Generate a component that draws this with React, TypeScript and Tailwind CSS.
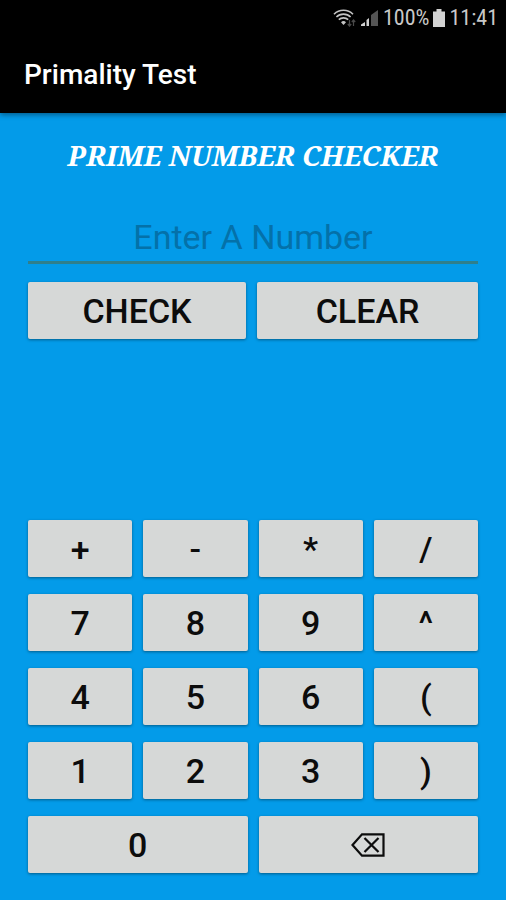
import { useState } from "react";

const KEYS = [
  "+", "-", "*", "/",
  "7", "8", "9", "^",
  "4", "5", "6", "(",
  "1", "2", "3", ")",
];

const BUTTON =
  "flex h-[57px] items-center justify-center rounded-xs bg-[#d6d8d7] text-[34px] leading-none font-medium text-[#0c0c0c] shadow-[0_1px_3px_rgba(0,0,0,0.4)] active:bg-[#c2c4c3]";

function isPrime(n: number) {
  if (n < 2) return false;
  for (let i = 2; i * i <= n; i++) {
    if (n % i === 0) return false;
  }
  return true;
}

// Small recursive descent parser for + - * / ^ and parentheses
function evaluate(source: string) {
  let pos = 0;

  const atom = (): number => {
    if (source[pos] === "(") {
      pos++;
      const value = sum();
      pos++;
      return value;
    }
    if (source[pos] === "-") {
      pos++;
      return -atom();
    }
    const start = pos;
    while (/\d/.test(source[pos] ?? "")) pos++;
    return start === pos ? NaN : Number(source.slice(start, pos));
  };

  const power = (): number => {
    const base = atom();
    if (source[pos] !== "^") return base;
    pos++;
    return base ** power();
  };

  const product = (): number => {
    let value = power();
    while (source[pos] === "*" || source[pos] === "/") {
      const op = source[pos++];
      value = op === "*" ? value * power() : value / power();
    }
    return value;
  };

  const sum = (): number => {
    let value = product();
    while (source[pos] === "+" || source[pos] === "-") {
      const op = source[pos++];
      value = op === "+" ? value + product() : value - product();
    }
    return value;
  };

  const total = sum();
  return pos < source.length ? NaN : total;
}

function WifiIcon() {
  return (
    <svg viewBox="0 0 24 20" className="h-5 w-6" fill="none" stroke="#c4c4c4" strokeWidth="1.6">
      <path d="M1 6.200C6.300 1 14.700 1 20 6.200" />
      <path d="M3.400 9C7.200 5.200 13.800 5.200 17.600 9" />
      <path d="M5.800 11.700C8.400 9.200 12.600 9.200 15.200 11.700" />
      <path d="M8 14.200C9.400 12.700 11.600 12.700 13 14.200L10.500 17Z" fill="#c4c4c4" stroke="none" />
      <path d="M16.500 12v6M14.800 16l1.700 2 1.700-2M20.500 18v-6M18.800 14l1.700-2 1.700 2" stroke="#4a4a4a" strokeWidth="1.2" />
    </svg>
  );
}

function SignalIcon() {
  return (
    <svg viewBox="0 0 18 18" className="h-[18px] w-[18px]">
      <path d="M0 17v-1.500l4-2.500v4z" fill="#d0d0d0" />
      <path d="M5.500 17v-6l2.500-2v8z" fill="#d0d0d0" />
      <path d="M10 17V6l7-5v16z" fill="#555555" />
    </svg>
  );
}

function BatteryIcon() {
  return (
    <svg viewBox="0 0 12 18" className="h-[18px] w-3">
      <path d="M3.500 0h5v2.500H12V18H0V2.500h3.500z" fill="#d2d2d2" />
    </svg>
  );
}

function BackspaceIcon() {
  return (
    <svg viewBox="0 0 34 24" className="h-6 w-[34px]" fill="none" stroke="#0c0c0c" strokeWidth="2.2">
      <path d="M11 1.300H32.500V22.700H11L1.500 12Z" />
      <path d="M13.500 5L27.500 19M27.500 5L13.500 19" />
    </svg>
  );
}

export default function App() {
  const [input, setInput] = useState("");
  const [result, setResult] = useState("");

  const handleCheck = () => {
    const value = evaluate(input.replace(/\s/g, ""));
    if (!Number.isSafeInteger(value)) {
      setResult("Invalid input");
      return;
    }
    setResult(`${value} is ${isPrime(value) ? "" : "not "}prime`);
  };

  const handleClear = () => {
    setInput("");
    setResult("");
  };

  return (
    <div className="flex min-h-screen flex-col bg-[#039be9] font-['Roboto',sans-serif]">
      {/* Status bar and title */}
      <header className="z-10 bg-black shadow-[0_2px_5px_rgba(0,0,0,0.4)]">
        <div className="flex h-9 items-center justify-end pr-2 font-['Roboto_Condensed','Liberation_Sans_Narrow',sans-serif] text-[22px] leading-none text-[#c8c8c8]">
          <WifiIcon />
          <span className="mx-1 flex">
            <SignalIcon />
          </span>
          <span>100%</span>
          <span className="mx-1">
            <BatteryIcon />
          </span>
          <span>11:41</span>
        </div>
        <div className="flex h-[77px] items-center px-6">
          <h1 className="text-[28px] leading-8 font-medium text-white">Primality Test</h1>
        </div>
      </header>

      <main className="flex flex-1 flex-col px-7 pt-6 pb-[27px]">
        <h2 className="text-center font-['Noto_Serif','Liberation_Serif',serif] text-[28px] leading-9 font-bold text-white italic">
          PRIME NUMBER CHECKER
        </h2>

        <input
          type="text"
          aria-label="Number"
          placeholder="Enter A Number"
          value={input}
          onChange={(e) => setInput(e.target.value)}
          className="mt-10 h-[51px] w-full border-b-3 border-[#2f7f8c] bg-transparent text-center text-[34px] text-[#0c0c0c] outline-none placeholder:text-[#0471a9]"
        />

        <div className="mt-[18px] grid grid-cols-[218fr_221fr] gap-[11px]">
          <button type="button" onClick={handleCheck} className={BUTTON}>
            CHECK
          </button>
          <button type="button" onClick={handleClear} className={BUTTON}>
            CLEAR
          </button>
        </div>

        <p aria-live="polite" className="flex flex-1 items-center justify-center text-center text-[28px] text-white">
          {result}
        </p>

        {/* Keypad */}
        <div className="grid grid-cols-4 gap-x-[11px] gap-y-[17px]">
          {KEYS.map((key) => (
            <button key={key} type="button" onClick={() => setInput((prev) => prev + key)} className={BUTTON}>
              {key}
            </button>
          ))}
          <button type="button" onClick={() => setInput((prev) => prev + "0")} className={`${BUTTON} col-span-2`}>
            0
          </button>
          <button
            type="button"
            aria-label="Backspace"
            onClick={() => setInput((prev) => prev.slice(0, -1))}
            className={`${BUTTON} col-span-2`}
          >
            <BackspaceIcon />
          </button>
        </div>
      </main>
    </div>
  );
}
